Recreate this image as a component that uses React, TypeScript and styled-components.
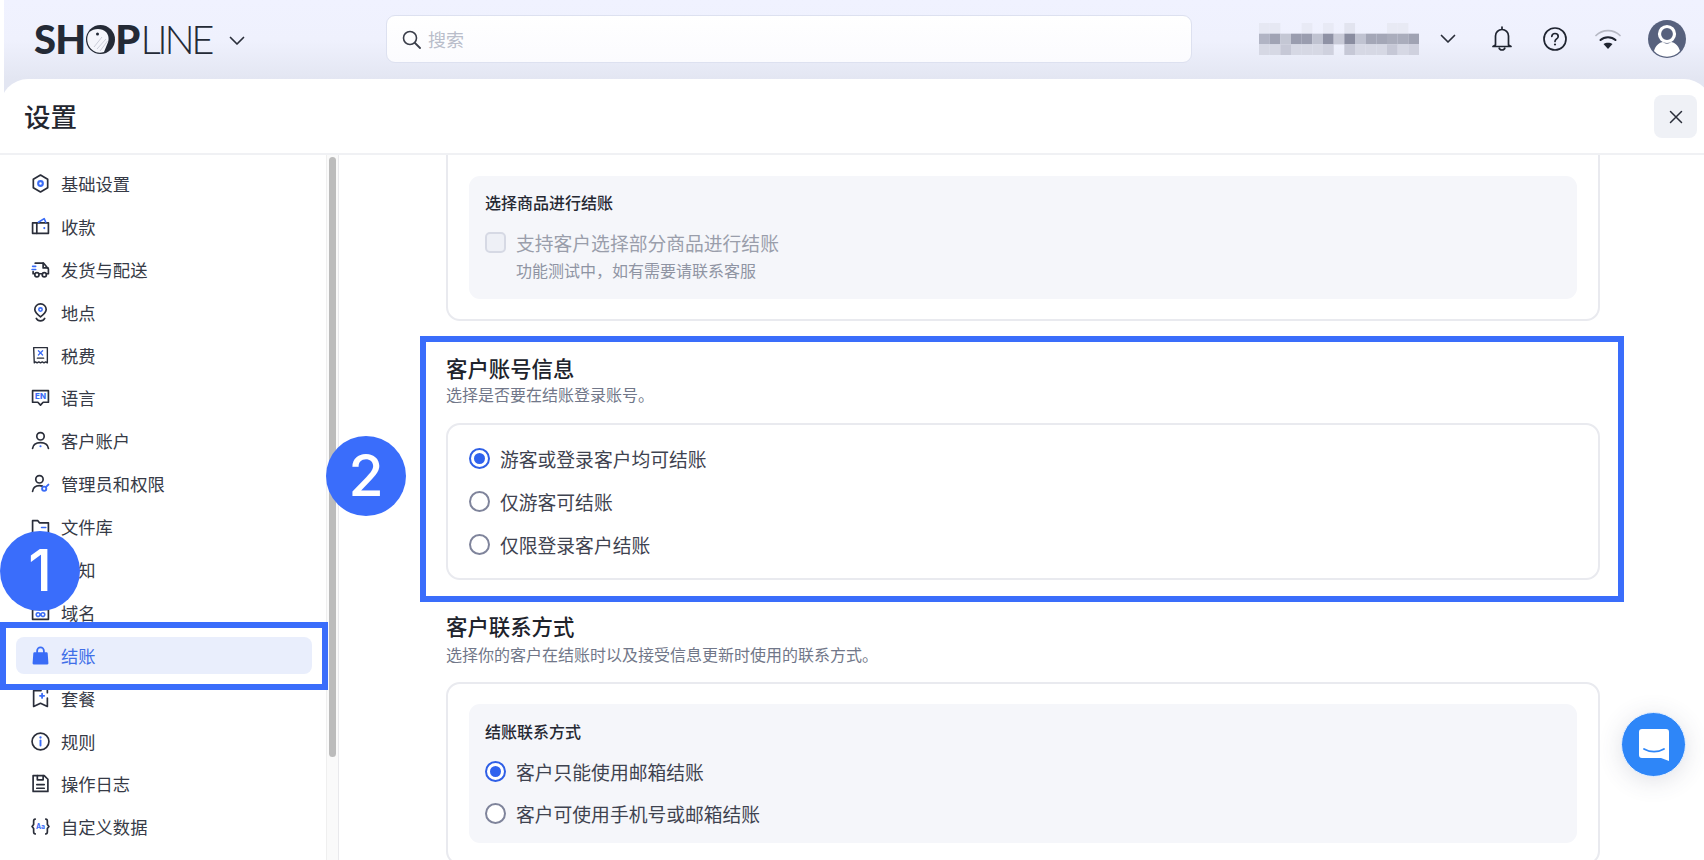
import React from 'react';
import styled, { createGlobalStyle } from 'styled-components';

const INK = '#2a2e3a';
const BLUE = '#3a6cf6';

const Global = createGlobalStyle`
  html, body { margin: 0; padding: 0; background: #fff; overflow: hidden; }
  body { font-family: "Noto Sans CJK SC", "Inter", sans-serif; color: #2a2e3a; }
  * { box-sizing: border-box; }
`;

const Page = styled.div`
  position: relative;
  width: 1704px;
  height: 860px;
  overflow: hidden;
  display: flex;
  flex-direction: column;
`;

const Header = styled.header`
  height: 107px;
  margin: 0 0 -28px 4px;
  padding: 14px 18px 0 30px;
  flex: none;
  display: flex;
  align-items: flex-start;
  background: linear-gradient(180deg, #f0f2ff 0, #eff1fd 40px, #e3e6f2 79px, #e3e6f2 107px);
`;

const Logo = styled.div`
  width: 177px;
  height: 50px;
  display: flex;
  align-items: center;
  font-family: "Lato", "Liberation Sans", sans-serif;
  font-size: 40px;
  line-height: 50px;
  color: #242a36;
  white-space: nowrap;
`;

const LogoBold = styled.span`
  font-weight: 900;
  letter-spacing: -0.9px;
`;

const LogoThin = styled.span`
  font-weight: 300;
  letter-spacing: -3.3px;
  margin-left: 1px;
`;

const LogoChevron = styled.span`
  display: flex;
  margin: 4px 0 0 18px;
`;

const Search = styled.div`
  width: 807px;
  height: 48px;
  margin: 1px 0 0 175px;
  padding: 0 0 0 15px;
  display: flex;
  align-items: center;
  gap: 7px;
  border: 1.5px solid #dde1f0;
  border-radius: 9px;
  background: linear-gradient(180deg, #ffffff 0%, #fbfbfe 100%);
  font-size: 18px;
  color: #b9bdca;
`;

const RightTools = styled.div`
  margin-left: 67px;
  display: flex;
  align-items: center;
  height: 50px;
`;

const Chevron = styled.span`
  display: flex;
  margin: 0 35px 0 21px;
`;

const ToolIcon = styled.span<{ $gap: number }>`
  display: flex;
  margin-right: ${p => p.$gap}px;
`;

const Panel = styled.div`
  flex: 1;
  min-height: 0;
  margin-right: -8px;
  background: #fff;
  border-radius: 28px 28px 0 0;
  display: flex;
  flex-direction: column;
  position: relative;
`;

const TitleBar = styled.div`
  height: 76px;
  flex: none;
  padding: 15px 15px 0 24px;
  display: flex;
  justify-content: space-between;
  align-items: flex-start;
  border-bottom: 2px solid #f0f1f4;
`;

const PageTitle = styled.h1`
  margin: 0;
  height: 44px;
  font-size: 26.5px;
  line-height: 44px;
  font-weight: 500;
  color: #23262f;
`;

const CloseButton = styled.button`
  width: 43px;
  height: 43px;
  margin-top: 1px;
  padding: 0;
  border: 0;
  border-radius: 8px;
  background: #eff1f6;
  display: flex;
  align-items: center;
  justify-content: center;
`;

const Body = styled.div`
  flex: 1;
  min-height: 0;
  display: flex;
  overflow: hidden;
`;

const Sidebar = styled.nav`
  width: 326px;
  flex: none;
  padding: 10px 14px 0 16px;
  display: flex;
  flex-direction: column;
  gap: 5.9px;
`;

const NavItem = styled.div<{ $active?: boolean }>`
  height: 37px;
  flex: none;
  padding-left: 15px;
  display: flex;
  align-items: center;
  gap: 11px;
  border-radius: 8px;
  font-size: 17.3px;
  color: ${p => (p.$active ? '#3f6ee8' : '#363a46')};
  background: ${p => (p.$active ? '#e9eefc' : 'transparent')};
`;

const Track = styled.div`
  width: 13px;
  flex: none;
  padding: 2px 2px 0 2px;
  background: #fafafa;
  border-left: 1px solid #efefef;
  border-right: 1px solid #e9e9ec;
`;

const Thumb = styled.div`
  width: 7px;
  height: 600px;
  border-radius: 4px;
  background: #bcbcbc;
`;

const Main = styled.main`
  flex: 1;
  min-width: 0;
  padding: 0 112px 0 107px;
`;

const Card = styled.section<{ $clipTop?: boolean; $pad: string }>`
  width: 1154px;
  margin-top: ${p => (p.$clipTop ? '-20px' : '0')};
  padding: ${p => p.$pad};
  border: 2px solid #e9eaef;
  border-radius: 14px;
  background: #fff;
`;

const InnerPanel = styled.div<{ $pad: string }>`
  padding: ${p => p.$pad};
  border-radius: 11px;
  background: #f5f6fa;
  display: flex;
  flex-direction: column;
`;

const PanelTitle = styled.div`
  height: 24px;
  line-height: 24px;
  font-size: 16px;
  font-weight: 500;
  color: #262933;
`;

const CheckRow = styled.div`
  margin-top: 16px;
  height: 24px;
  display: flex;
  align-items: center;
  gap: 10px;
  font-size: 18.8px;
  color: #9a9eab;
`;

const CheckBox = styled.span`
  width: 21px;
  height: 21px;
  flex: none;
  border: 2px solid #d6d9e4;
  border-radius: 5px;
  background: #eef0f6;
`;

const CheckHint = styled.div`
  margin: 5px 0 0 31px;
  height: 22px;
  line-height: 22px;
  font-size: 16px;
  color: #8f94a3;
`;

const SectionTitle = styled.h2<{ $top: number }>`
  margin: ${p => p.$top}px 0 0;
  height: 28px;
  line-height: 28px;
  font-size: 21.4px;
  font-weight: 500;
  color: #20232c;
`;

const SectionSub = styled.p<{ $top: number; $bottom: number }>`
  margin: ${p => p.$top}px 0 ${p => p.$bottom}px;
  height: 22px;
  line-height: 22px;
  font-size: 16px;
  color: #717789;
`;

const RadioRow = styled.div<{ $top?: number }>`
  height: 30px;
  margin-top: ${p => p.$top ?? 0}px;
  display: flex;
  align-items: center;
  gap: 10px;
  font-size: 18.8px;
  color: #3f4350;
`;

const RadioDot = styled.span<{ $on?: boolean }>`
  width: 21px;
  height: 21px;
  flex: none;
  border-radius: 50%;
  border: 2px solid ${p => (p.$on ? '#2f5fe6' : '#7f849b')};
  background: #fff;
  display: flex;
  align-items: center;
  justify-content: center;
  &::after {
    content: '';
    width: 11px;
    height: 11px;
    border-radius: 50%;
    background: ${p => (p.$on ? '#2f62ee' : 'transparent')};
  }
`;

const Highlight = styled.div<{ $l: number; $t: number; $w: number; $h: number }>`
  position: absolute;
  left: ${p => p.$l}px;
  top: ${p => p.$t}px;
  width: ${p => p.$w}px;
  height: ${p => p.$h}px;
  border: 6px solid #3a6dfb;
  pointer-events: none;
`;

const StepBadge = styled.div<{ $l: number; $t: number }>`
  position: absolute;
  left: ${p => p.$l}px;
  top: ${p => p.$t}px;
  width: 80px;
  height: 80px;
  border-radius: 50%;
  background: #3a6dfb;
  color: #fff;
  font-family: "Inter", "Liberation Sans", sans-serif;
  font-size: 57px;
  font-weight: 500;
  line-height: 80px;
  text-align: center;
`;

const ChatButton = styled.div`
  position: absolute;
  left: 1621px;
  top: 712px;
  width: 65px;
  height: 65px;
  border-radius: 50%;
  background: #2e86f8;
  border: 1px solid #e6f0fe;
  box-shadow: 0 4px 24px rgba(60, 70, 100, 0.16);
  display: flex;
  align-items: center;
  justify-content: center;
`;

const S = { fill: 'none', stroke: INK, strokeWidth: 1.6, strokeLinecap: 'round', strokeLinejoin: 'round' } as const;
const A = { fill: 'none', stroke: BLUE, strokeWidth: 1.5, strokeLinecap: 'round', strokeLinejoin: 'round' } as const;

const Ico: React.FC<{ children: React.ReactNode }> = ({ children }) => (
  <svg width="19" height="19" viewBox="0 0 18 18" style={{ flex: 'none' }}>{children}</svg>
);

const navIcons: React.ReactNode[] = [
  <Ico><path {...S} d="M9 1 15.8 5v8L9 17 2.2 13V5z" /><circle {...A} cx="9" cy="9" r="2.2" strokeWidth={2} /></Ico>,
  <Ico><path {...S} d="M1.500 5.500h15v10h-15z" /><path {...S} d="M5.500 5.500v10" /><path {...A} d="M7 5 12.500 1.500 14 5" /><circle cx="12.600" cy="10.500" r="1" fill={BLUE} /></Ico>,
  <Ico><path {...S} d="M4 3h8l4.500 5.500V13h-2M8 13h3M3.500 13H2v-2" /><circle {...S} cx="5.600" cy="14" r="2" /><circle {...S} cx="12.600" cy="14" r="2" /><path {...S} d="M11.500 3v4.500h4.600" /><path {...A} d="M1.500 6h3M1 9h3.500" /></Ico>,
  <Ico><path {...S} d="M9 13.200C6 10.800 3.600 8.800 3.600 6.200a5.400 5.400 0 0 1 10.800 0c0 2.600-2.400 4.600-5.400 7z" /><circle {...A} cx="9" cy="6.200" r="1.600" /><path {...S} d="M5 14.600c.8 1.500 2.300 2.300 4 2.300s3.200-.8 4-2.300" /></Ico>,
  <Ico><path {...S} strokeWidth={1.3} d="M2.500 1.500h13V16l-1.600-1-1.600 1-1.600-1-1.700 1-1.600-1-1.600 1-1.600-1-1.100 1z" /><path {...A} strokeWidth={1.2} d="M7 4.500l4 4M11 4.500l-4 4" /><path {...S} strokeWidth={1.2} d="M6 11.500h6" /></Ico>,
  <Ico><path {...S} d="M1.500 2.500h15v11h-5L9 16.200 6.500 13.500h-5z" /><text x="9" y="10.800" textAnchor="middle" fontFamily="Inter, sans-serif" fontSize="7.500" fontWeight="800" fill={BLUE}>EN</text></Ico>,
  <Ico><circle {...S} cx="9" cy="5" r="3.500" /><path {...S} d="M1.500 16.500c.5-3.600 3.700-5.500 7.500-5.500s7 1.900 7.500 5.500" /><circle cx="9" cy="14.500" r="1" fill={BLUE} /></Ico>,
  <Ico><circle {...S} cx="8" cy="5" r="3.500" /><path {...S} d="M1.500 16.500c.4-3.500 3-5.500 6.500-5.500 1 0 2 .2 2.800.5" /><circle {...A} cx="12.500" cy="14" r="2" strokeWidth={1.800} /><path {...A} strokeWidth={1.800} d="M14 12.500l2.500-2.500" /></Ico>,
  <Ico><path {...S} d="M1.500 15.500v-12h5l1.500 2h8.500v10z" /><path {...A} d="M10 10h4" /></Ico>,
  <Ico><path {...S} d="M4 13V8a5 5 0 0 1 10 0v5l1.500 1.500h-13z" /><path {...A} d="M7.500 16.500h3" /></Ico>,
  <Ico><path {...S} d="M1.500 2.500h15v13h-15zM1.500 6h15" /><path {...A} d="M8.500 10.800a1.800 1.800 0 1 0 0 .4h1a1.800 1.800 0 1 0 0-.4z" /></Ico>,
  <Ico><path fill={BLUE} d="M3.200 6h11.600a1 1 0 0 1 1 .9l.7 9.500a1 1 0 0 1-1 1.100H2.500a1 1 0 0 1-1-1.100l.7-9.500a1 1 0 0 1 1-.9z" /><path {...A} strokeWidth={1.700} d="M5.800 7V4.500a3.200 3.200 0 0 1 6.400 0V7" /></Ico>,
  <Ico><path {...S} d="M9.500 1.500H2.500v15l6.500-3 6.500 3V8.500" /><path {...S} d="M15.500 1.500v2" /><path {...A} strokeWidth={1.700} d="M8.500 6.500h4M10.500 4.500v4" /></Ico>,
  <Ico><circle {...S} cx="9" cy="9" r="8" /><path {...A} strokeWidth={1.800} d="M9 8v4.800" /><circle cx="9" cy="5.200" r="1.100" fill={BLUE} /></Ico>,
  <Ico><path {...S} d="M2 1.500h10.500L16 5v11.500H2z" /><path {...S} d="M6 1.500v4h5.500v-4" /><path {...S} d="M5.500 10h7M5.500 13.500h7" /></Ico>,
  <Ico><path {...S} d="M4 2C2.500 2 2.500 3 2.500 4v3L1 9l1.500 2v3c0 1 0 2 1.500 2M14 2c1.500 0 1.500 1 1.500 2v3L17 9l-1.500 2v3c0 1 0 2-1.500 2" /><text x="9" y="11.500" textAnchor="middle" fontFamily="Inter, sans-serif" fontSize="6.500" fontWeight="700" fill={BLUE}>Aa</text></Ico>,
];

const navLabels = ['基础设置', '收款', '发货与配送', '地点', '税费', '语言', '客户账户', '管理员和权限', '文件库', '通知', '域名', '结账', '套餐', '规则', '操作日志', '自定义数据'];

const mosaic: (string | null)[][] = [
  ['#e6e8f3', '#e6e8f3', null, null, '#e8eaf5', null, '#e8eaf5', null, '#e2e4ef', null, null, null, '#e8eaf4', '#e8eaf4', null],
  ['#b1b4c4', '#a0a3b4', '#c4c7d4', '#9a9daf', '#9a9daf', '#c0c3d1', '#8f92a5', '#c8cad7', '#8a8da0', '#c0c3d1', '#a4a7b7', '#a4a7b7', '#aaadbc', '#aaadbc', '#a0a3b3'],
  ['#d6d8e4', '#d6d8e4', '#c6c8d6', '#d6d8e4', '#d6d8e4', '#d6d8e4', '#cfd1de', null, '#c6c8d6', '#d6d8e4', '#d6d8e4', '#d6d8e4', '#c6c8d6', '#d6d8e4', '#cfd1de'],
];

const ChevronIcon = () => (
  <svg width="16" height="10" viewBox="0 0 16 10"><path d="M1.500 1.500 8 8l6.500-6.500" fill="none" stroke="#2a2e3a" strokeWidth="1.700" strokeLinecap="round" strokeLinejoin="round" /></svg>
);

export default function App() {
  return (
    <Page>
      <Global />
      <Header>
        <Logo>
          <LogoBold>SH</LogoBold>
          <svg width="29" height="29" viewBox="0 0 29 29" style={{ margin: '0 0 0 1px', flex: 'none' }}>
            <circle cx="14.500" cy="14.500" r="14.500" fill="#242a36" />
            <path d="M3.500 7C8 3 16 3 20 7c3 3.200 3.300 8 1.500 11.500L18 27C11 29 6 26 3 21 .6 16 .6 11 3.500 7z" fill="#f4f5fb" />
            <circle cx="11.500" cy="9" r="1.500" fill="#242a36" />
            <path d="M11 24 20 14M14 26l7.500-10M8 22l8-10" stroke="#b9bcc8" strokeWidth="0.700" fill="none" />
          </svg>
          <LogoBold>P</LogoBold>
          <LogoThin>LINE</LogoThin>
          <LogoChevron><ChevronIcon /></LogoChevron>
        </Logo>
        <Search>
          <svg width="19" height="19" viewBox="0 0 19 19"><circle cx="8" cy="8" r="6.500" fill="none" stroke="#3a3e4a" strokeWidth="1.600" /><path d="M13 13l5 5" stroke="#3a3e4a" strokeWidth="1.800" strokeLinecap="round" /></svg>
          搜索
        </Search>
        <RightTools>
          <svg width="160" height="32" viewBox="0 0 160 32" style={{ flex: 'none' }}>
            {mosaic.flatMap((row, r) => row.map((c, i) => c && <rect key={`${r}-${i}`} x={i * 10.667} y={r * 10.667} width="10.700" height="10.700" fill={c} />))}
          </svg>
          <Chevron><ChevronIcon /></Chevron>
          <ToolIcon $gap={30}>
            <svg width="22" height="26" viewBox="0 0 22 26"><path d="M11 1v2.500M4.500 19V10a6.500 6.500 0 0 1 13 0v9l2.500 1.500H2z" fill="none" stroke="#1f2430" strokeWidth="1.700" strokeLinejoin="round" strokeLinecap="round" /><path d="M8 21.500c.4 1.700 1.500 2.500 3 2.500s2.600-.8 3-2.500" fill="none" stroke="#1f2430" strokeWidth="1.700" /></svg>
          </ToolIcon>
          <ToolIcon $gap={28}>
            <svg width="24" height="24" viewBox="0 0 24 24"><circle cx="12" cy="12" r="11" fill="none" stroke="#1f2430" strokeWidth="1.700" /><path d="M8.800 9.300A3.200 3.200 0 0 1 12 6.500c1.900 0 3.200 1.300 3.200 2.900 0 2.500-3.200 2.500-3.200 5" fill="none" stroke="#1f2430" strokeWidth="1.700" strokeLinecap="round" /><circle cx="12" cy="17.500" r="1.100" fill="#1f2430" /></svg>
          </ToolIcon>
          <ToolIcon $gap={27}>
            <svg width="26" height="21" viewBox="0 0 26 21"><path d="M1 6.500C7.500 0 18.500 0 25 6.500" fill="none" stroke="#b6b9c4" strokeWidth="1.700" strokeLinecap="round" /><path d="M5.500 11c4-3.700 11-3.700 15 0" fill="none" stroke="#1f2430" strokeWidth="2" strokeLinecap="round" /><path d="M8.500 15c2.500-1.600 6.500-1.600 9 0L13 20z" fill="#1f2430" /></svg>
          </ToolIcon>
          <svg width="38" height="38" viewBox="0 0 38 38" style={{ flex: 'none' }}>
            <circle cx="19" cy="19" r="19" fill="#57617d" />
            <circle cx="19" cy="14" r="7.500" fill="none" stroke="#fff" strokeWidth="3.200" />
            <path d="M6 31c1.500-6 6.500-9 9-9 1.200 1.200 2.500 1.700 4 1.700s2.800-.5 4-1.700c2.500 0 7.500 3 9 9-3.400 3.700-8 5.700-13 5.700S9.400 34.700 6 31z" fill="#fff" />
          </svg>
        </RightTools>
      </Header>

      <Panel>
        <TitleBar>
          <PageTitle>设置</PageTitle>
          <CloseButton aria-label="关闭">
            <svg width="14" height="14" viewBox="0 0 14 14"><path d="M1.500 1.500l11 11M12.500 1.500l-11 11" stroke="#2a2e3a" strokeWidth="1.500" strokeLinecap="round" /></svg>
          </CloseButton>
        </TitleBar>
        <Body>
          <Sidebar>
            {navLabels.map((label, i) => (
              <NavItem key={label} $active={label === '结账'}>
                {navIcons[i]}
                {label}
              </NavItem>
            ))}
          </Sidebar>
          <Track><Thumb /></Track>
          <Main>
            <Card $clipTop $pad="39px 21px 20px">
              <InnerPanel $pad="14px 16px 18px">
                <PanelTitle>选择商品进行结账</PanelTitle>
                <CheckRow><CheckBox />支持客户选择部分商品进行结账</CheckRow>
                <CheckHint>功能测试中，如有需要请联系客服</CheckHint>
              </InnerPanel>
            </Card>

            <SectionTitle $top={33}>客户账号信息</SectionTitle>
            <SectionSub $top={1} $bottom={18}>选择是否要在结账登录账号。</SectionSub>
            <Card $pad="18px 21px 19px">
              <RadioRow><RadioDot $on />游客或登录客户均可结账</RadioRow>
              <RadioRow $top={13}><RadioDot />仅游客可结账</RadioRow>
              <RadioRow $top={13}><RadioDot />仅限登录客户结账</RadioRow>
            </Card>

            <SectionTitle $top={32}>客户联系方式</SectionTitle>
            <SectionSub $top={3} $bottom={17}>选择你的客户在结账时以及接受信息更新时使用的联系方式。</SectionSub>
            <Card $pad="20px 21px 20px">
              <InnerPanel $pad="15px 16px 15px">
                <PanelTitle>结账联系方式</PanelTitle>
                <RadioRow $top={13}><RadioDot $on />客户只能使用邮箱结账</RadioRow>
                <RadioRow $top={12}><RadioDot />客户可使用手机号或邮箱结账</RadioRow>
              </InnerPanel>
            </Card>
          </Main>
        </Body>
      </Panel>

      <Highlight $l={0} $t={622} $w={328} $h={68} />
      <Highlight $l={420} $t={336} $w={1204} $h={266} />
      <StepBadge $l={0} $t={531}>1</StepBadge>
      <StepBadge $l={326} $t={436}>2</StepBadge>
      <ChatButton>
        <svg width="32" height="34" viewBox="0 0 32 34">
          <path d="M4 1h24a3 3 0 0 1 3 3v29l-8-3H4a3 3 0 0 1-3-3V4a3 3 0 0 1 3-3z" fill="#fff" />
          <path d="M6 21c6 3.500 14 3.500 20 0" fill="none" stroke="#2e86f8" strokeWidth="1.800" strokeLinecap="round" />
        </svg>
      </ChatButton>
    </Page>
  );
}
